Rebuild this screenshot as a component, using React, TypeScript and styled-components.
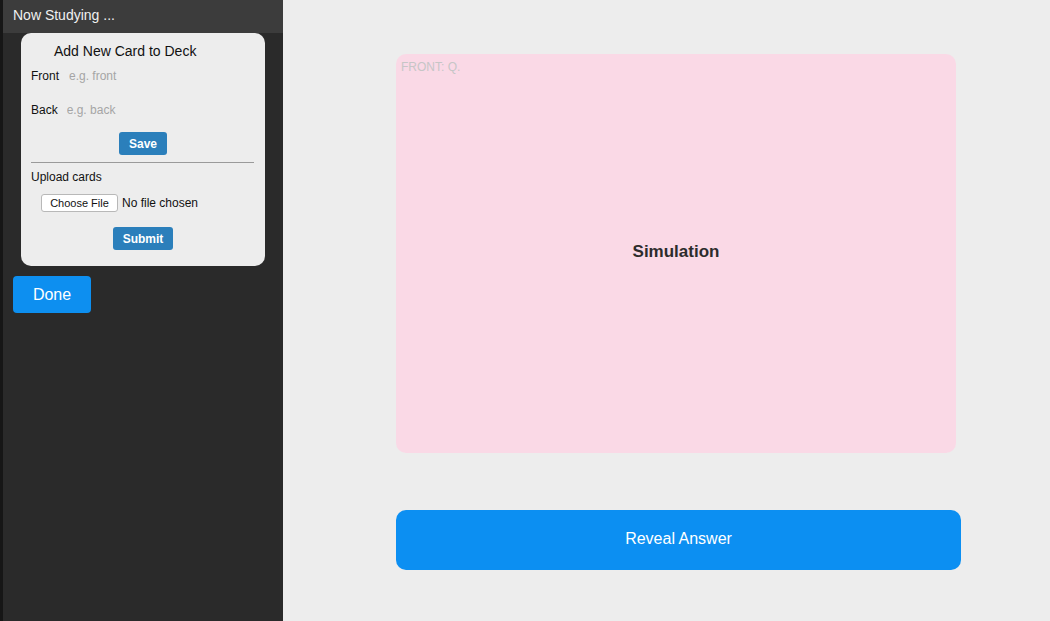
import React from "react";
import styled, { createGlobalStyle } from "styled-components";

const Global = createGlobalStyle`
  html, body { margin: 0; padding: 0; height: 100%; }
  body { font-family: "Liberation Sans", Arial, sans-serif; background: #ededed; }
  #root { height: 100%; }
  * { box-sizing: border-box; }
`;

const Page = styled.div`
  display: flex;
  width: 1050px;
  height: 621px;
  overflow: hidden;
`;

const Edge = styled.div`
  width: 3px;
  background: #161616;
  flex-shrink: 0;
`;

const Sidebar = styled.aside`
  width: 280px;
  background: #2a2a2a;
  display: flex;
  flex-direction: column;
  flex-shrink: 0;
`;

const SideHeader = styled.div`
  height: 33px;
  background: #3c3c3c;
  color: #f0f0f0;
  font-size: 14px;
  padding: 7px 0 0 10px;
`;

const Panel = styled.div`
  margin: 0 18px 0 18px;
  background: #ededed;
  border-radius: 10px;
  padding: 10px 10px 16px 10px;
  display: flex;
  flex-direction: column;
  width: 244px;
`;

const PanelTitle = styled.div`
  font-size: 14px;
  color: #111;
  padding-left: 23px;
  height: 17px;
  line-height: 17px;
`;

const Field = styled.div<{ $mt: number }>`
  display: flex;
  align-items: center;
  height: 17px;
  margin-top: ${(p) => p.$mt}px;
  font-size: 12px;
  color: #111;
`;

const Input = styled.input<{ $ml: number }>`
  border: none;
  background: transparent;
  font-family: "Liberation Sans", Arial, sans-serif;
  font-size: 12px;
  padding: 0;
  margin-left: ${(p) => p.$ml}px;
  width: 150px;
  color: #111;
  outline: none;
  &::placeholder { color: #a5a5a5; }
`;

const Centered = styled.div<{ $mt: number }>`
  display: flex;
  justify-content: center;
  margin-top: ${(p) => p.$mt}px;
`;

const SmallButton = styled.button`
  background: #2b7fbb;
  color: #fff;
  border: none;
  border-radius: 3px;
  font-family: "Liberation Sans", Arial, sans-serif;
  font-weight: bold;
  font-size: 12px;
  height: 23px;
  padding: 0 10px;
  cursor: pointer;
`;

const Divider = styled.hr`
  border: none;
  border-top: 1px solid #9a9a9a;
  margin: 7px 0 0 0;
  width: 223px;
`;

const Label = styled.div`
  font-size: 12px;
  color: #111;
  margin-top: 7px;
  height: 14px;
  line-height: 14px;
`;

const FileRow = styled.div`
  display: flex;
  align-items: center;
  margin: 10px 0 0 10px;
  font-size: 12px;
  color: #111;
  gap: 4px;
`;

const FileButton = styled.button`
  background: #fff;
  border: 1px solid #b8b8b8;
  border-radius: 3px;
  font-family: "Liberation Sans", Arial, sans-serif;
  font-size: 11px;
  color: #111;
  height: 18px;
  width: 77px;
  padding: 0;
`;

const DoneButton = styled.button`
  margin: 10px 0 0 10px;
  width: 78px;
  height: 37px;
  background: #0d8ff0;
  color: #fff;
  border: none;
  border-radius: 4px;
  font-family: "Liberation Sans", Arial, sans-serif;
  font-size: 16px;
  cursor: pointer;
`;

const Main = styled.main`
  flex: 1;
  background: #ededed;
  padding: 54px 0 0 113px;
  display: flex;
  flex-direction: column;
`;

const Card = styled.div`
  width: 560px;
  height: 399px;
  background: #fad9e6;
  border-radius: 10px;
  position: relative;
  display: flex;
  align-items: center;
  justify-content: center;
`;

const CardTag = styled.div`
  position: absolute;
  top: 6px;
  left: 5px;
  font-size: 12px;
  color: #c6c6c6;
`;

const CardText = styled.div`
  font-size: 17px;
  font-weight: bold;
  color: #2c2c2c;
  margin-top: -3px;
`;

const Reveal = styled.button`
  margin-top: 57px;
  width: 565px;
  height: 60px;
  background: #0c8ff2;
  color: #fff;
  border: none;
  border-radius: 10px;
  font-family: "Liberation Sans", Arial, sans-serif;
  font-size: 16px;
  padding-bottom: 3px;
  cursor: pointer;
`;

export default function App() {
  return (
    <>
      <Global />
      <Page>
        <Edge />
        <Sidebar>
          <SideHeader>Now Studying ...</SideHeader>
          <Panel>
            <PanelTitle>Add New Card to Deck</PanelTitle>
            <Field $mt={7}>
              Front
              <Input $ml={10} placeholder="e.g. front" />
            </Field>
            <Field $mt={17}>
              Back
              <Input $ml={9} placeholder="e.g. back" />
            </Field>
            <Centered $mt={14}>
              <SmallButton>Save</SmallButton>
            </Centered>
            <Divider />
            <Label>Upload cards</Label>
            <FileRow>
              <FileButton>Choose File</FileButton>
              No file chosen
            </FileRow>
            <Centered $mt={15}>
              <SmallButton>Submit</SmallButton>
            </Centered>
          </Panel>
          <DoneButton>Done</DoneButton>
        </Sidebar>
        <Main>
          <Card>
            <CardTag>FRONT: Q.</CardTag>
            <CardText>Simulation</CardText>
          </Card>
          <Reveal>Reveal Answer</Reveal>
        </Main>
      </Page>
    </>
  );
}
